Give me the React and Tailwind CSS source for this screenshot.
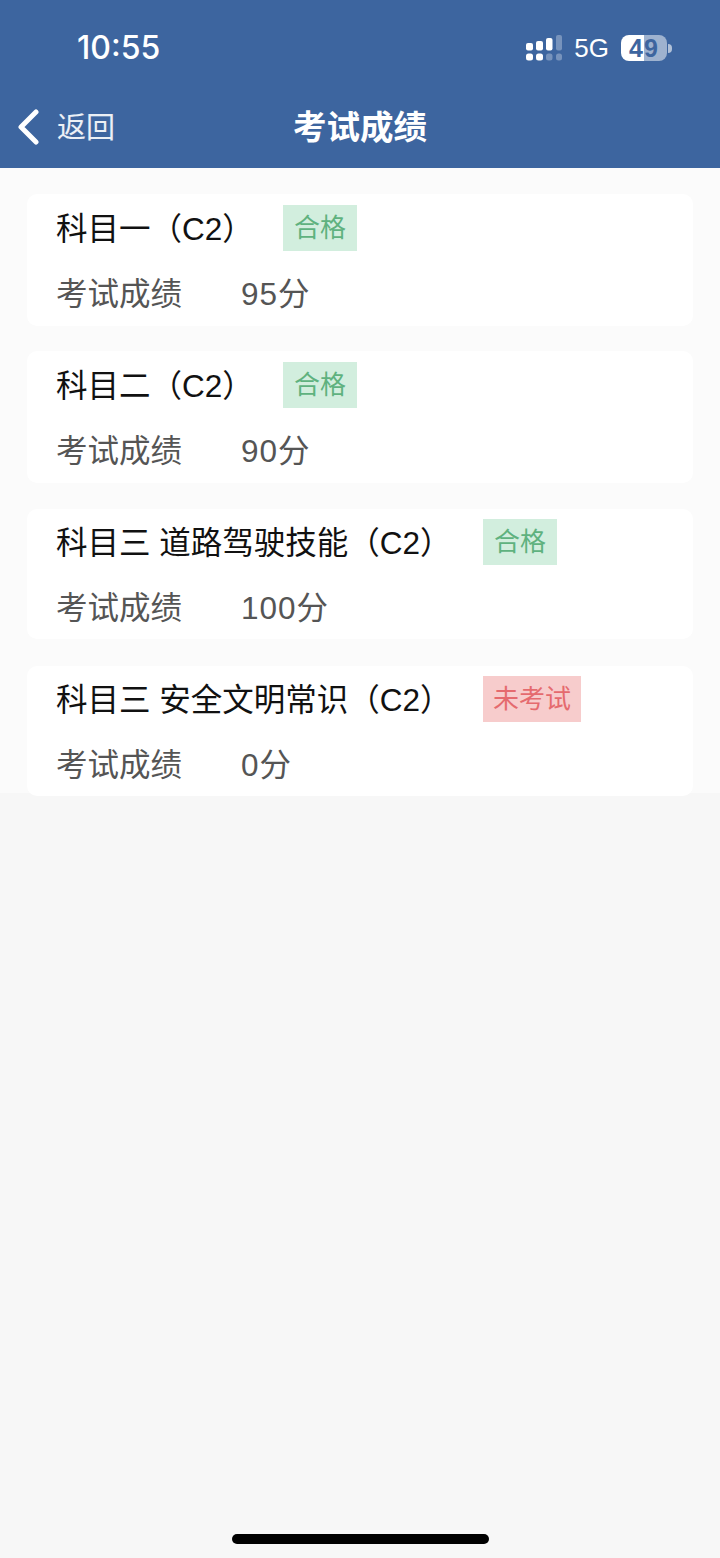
import React from 'react';

const FONT = 'font-["Liberation_Sans","Noto_Sans_CJK_SC",sans-serif]';

const EXAMS = [
    { title: '科目一（C2）', status: '合格', pass: true, score: '95', box: 'pt-[11px] pb-[2px] mb-[25px]', titleW: 'w-[227px]' },
    { title: '科目二（C2）', status: '合格', pass: true, score: '90', box: 'pt-[11px] pb-[2px] mb-[26px]', titleW: 'w-[227px]' },
    { title: '科目三 道路驾驶技能（C2）', status: '合格', pass: true, score: '100', box: 'pt-[10px] pb-[1px] mb-[27px]', titleW: 'w-[427px]' },
    { title: '科目三 安全文明常识（C2）', status: '未考试', pass: false, score: '0', box: 'pt-[10px] pb-[1px]', titleW: 'w-[427px]' },
];

function SignalIcon() {
    return (
        <svg width="36" height="26" viewBox="0 0 36 26" fill="#fff">
            <rect x="0" y="8" width="7" height="7.5" rx="2" />
            <rect x="10" y="6" width="7" height="9.5" rx="2" />
            <rect x="20" y="3" width="6.5" height="12.5" rx="2" />
            <rect x="30" y="0" width="6" height="15.5" rx="2" opacity="0.3" />
            <rect x="0" y="18.5" width="7" height="7" rx="2.5" />
            <rect x="10" y="18.5" width="7" height="7" rx="2.5" />
            <rect x="20" y="18.5" width="6.5" height="7" rx="2.5" opacity="0.3" />
            <rect x="30" y="18.5" width="6" height="7" rx="2.5" opacity="0.3" />
        </svg>
    );
}

function Battery() {
    return (
        <div className="flex items-center">
            <div className="w-[46px] h-[26px] rounded-[8px] bg-[linear-gradient(90deg,#ffffff_50%,#9eb2cf_50%)] flex items-center justify-center">
                <span className="text-[25px] leading-none font-bold text-[#3d659f] tracking-[1px]">49</span>
            </div>
            <div className="w-[4px] h-[9px] ml-[1px] rounded-r-full bg-white/60" />
        </div>
    );
}

function ExamCard({ exam }) {
    return (
        <div className={`bg-white rounded-[10px] pl-[29px] ${exam.box}`}>
            <div className="flex items-start h-[46px]">
                <div className={`${exam.titleW} shrink-0 text-[31.5px] leading-[48px] text-[#111] whitespace-nowrap`}>{exam.title}</div>
                <div className={`h-[46px] flex items-center text-[26px] leading-none ${exam.pass ? 'bg-[#d2eede] text-[#5fb27f] px-[11px]' : 'bg-[#f7cccc] text-[#e56a6e] px-[10px]'}`}>
                    {exam.status}
                </div>
            </div>
            <div className="flex items-center mt-[15px] h-[58px] text-[31.5px] text-[#555]">
                <span className="w-[185px] shrink-0">考试成绩</span>
                <span className="tracking-[1px]">{exam.score}分</span>
            </div>
        </div>
    );
}

export default function App() {
    return (
        <div className={`relative w-[720px] h-[1558px] bg-[#f7f7f7] overflow-hidden ${FONT}`}>
            {/* Status bar */}
            <div className="bg-[#3d659f] h-[168px] text-white">
                <div className="flex items-center h-[88px] pl-[77px] pr-[48px] pt-[8px]">
                    <span className="text-[32px] font-medium font-['Inter',sans-serif]">10:55</span>
                    <div className="ml-auto flex items-center">
                        <SignalIcon />
                        <span className="ml-[12px] mr-[12px] text-[26px]">5G</span>
                        <Battery />
                    </div>
                </div>
                {/* Nav */}
                <div className="relative flex items-center justify-center h-[80px]">
                    <div className="absolute left-[17px] top-[21px] flex items-center">
                        <svg width="22" height="36" viewBox="0 0 22 36" fill="none" stroke="#fff" strokeWidth="5" strokeLinecap="round" strokeLinejoin="round">
                            <path d="M19 3 L4 18 L19 33" />
                        </svg>
                        <span className="ml-[18px] mt-[3px] text-[29px] leading-none text-white/90">返回</span>
                    </div>
                    <span className="text-[33.5px] font-bold leading-none">考试成绩</span>
                </div>
            </div>

            {/* Exam list */}
            <div className="bg-[#fbfbfb] h-[625px] px-[27px] pt-[26px]">
                {EXAMS.map((exam) => (
                    <ExamCard key={exam.title} exam={exam} />
                ))}
            </div>

            {/* Home indicator */}
            <div className="absolute left-[232px] bottom-[14px] w-[257px] h-[10px] rounded-full bg-black" />
        </div>
    );
}
